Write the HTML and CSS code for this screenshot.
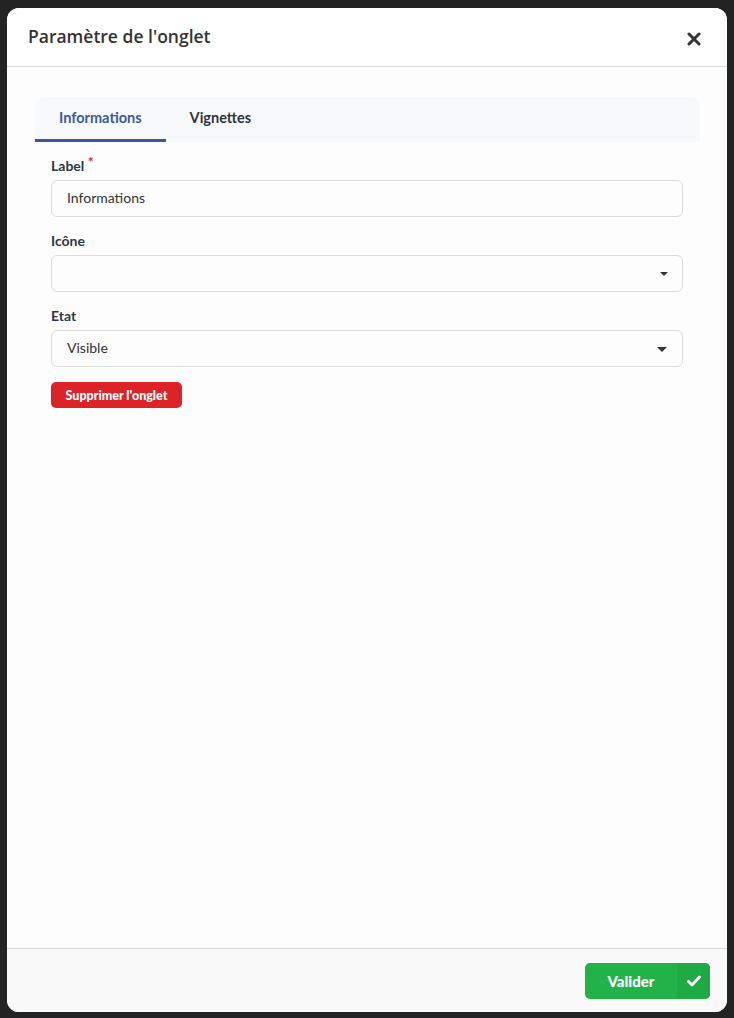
FILE: index.html
```html
<!DOCTYPE html>
<html lang="fr">
<head>
    <meta charset="UTF-8">
    <meta name="viewport" content="width=device-width, initial-scale=1.0">
    <title>Paramètre de l'onglet</title>
    <link rel="stylesheet" href="styles.css">
</head>
<body>
    <div class="modal">
        <div class="modal-header">
            <h2 class="modal-title">Paramètre de l'onglet</h2>
            <button type="button" class="close-btn" aria-label="Fermer">
                <svg width="14" height="14" viewBox="0 0 14 14">
                    <path d="M2 2 L12 12 M12 2 L2 12" stroke="#333" stroke-width="3" stroke-linecap="round"/>
                </svg>
            </button>
        </div>

        <div class="modal-body">
            <div class="tabs">
                <div class="tab active">Informations</div>
                <div class="tab">Vignettes</div>
            </div>

            <form class="tab-form">
                <div class="form-group">
                    <label for="label">Label <span class="required">*</span></label>
                    <input type="text" id="label" class="form-control" value="Informations">
                </div>

                <div class="form-group">
                    <label for="icone">Icône</label>
                    <div class="select-box" id="icone">
                        <span class="select-value"></span>
                        <span class="caret small"></span>
                    </div>
                </div>

                <div class="form-group">
                    <label for="etat">Etat</label>
                    <div class="select-box" id="etat">
                        <span class="select-value">Visible</span>
                        <span class="caret"></span>
                    </div>
                </div>

                <button type="button" class="btn-danger">Supprimer l'onglet</button>
            </form>
        </div>

        <div class="modal-footer">
            <button type="button" class="btn-success">
                <span class="btn-label">Valider</span>
                <span class="btn-icon">
                    <svg width="14" height="12" viewBox="0 0 14 12">
                        <path d="M1.5 6.5 L5 10 L12.5 2" fill="none" stroke="#fff" stroke-width="2.8" stroke-linecap="round" stroke-linejoin="round"/>
                    </svg>
                </span>
            </button>
        </div>
    </div>
</body>
</html>
```

FILE: styles.css
```css
html, body {
    height: 100%;
}
body {
    margin: 0;
    padding: 8px 7px 6px 7px;
    box-sizing: border-box;
    background-color: #232323;
    font-family: Lato, "Open Sans", sans-serif;
    color: #333;
}
.modal {
    width: 720px;
    height: 1004px;
    background: #fdfdfd;
    border-radius: 12px;
    display: flex;
    flex-direction: column;
    overflow: hidden;
}
.modal-header {
    height: 58px;
    flex: 0 0 auto;
    display: flex;
    align-items: center;
    justify-content: space-between;
    padding: 0 24px 0 21px;
    background: #fff;
    border-bottom: 1px solid #dcdcdc;
}
.modal-title {
    margin: 0;
    font-family: "Open Sans", sans-serif;
    font-size: 17.5px;
    font-weight: 600;
    color: #333;
    position: relative;
    top: -1px;
}
.close-btn {
    background: none;
    border: none;
    padding: 0;
    width: 18px;
    height: 18px;
    display: flex;
    align-items: center;
    justify-content: center;
    cursor: pointer;
    margin-top: 3px;
}
.modal-body {
    flex: 1 1 auto;
    padding: 30px 27px 0 28px;
}
.tabs {
    display: flex;
    height: 45px;
    background: #f8f9fa;
    border-radius: 10px 10px 0 0;
}
.tab {
    padding: 0 24px;
    display: flex;
    align-items: center;
    font-size: 14.5px;
    font-weight: 700;
    color: #2d3340;
    box-sizing: border-box;
    padding-bottom: 5px;
    cursor: pointer;
}
.tab.active {
    color: #3c5a99;
    border-bottom: 3px solid #3c5a99;
    padding-bottom: 2px;
}
.tab-form {
    padding: 15px 17px 0 16px;
}
.form-group {
    margin-bottom: 15px;
}
.form-group label {
    display: block;
    font-size: 14px;
    font-weight: 700;
    line-height: 18px;
    color: #2d3748;
    margin-bottom: 5px;
}
.required {
    color: #d9232d;
    position: relative;
    top: -4px;
}
.form-control,
.select-box {
    width: 100%;
    height: 37px;
    box-sizing: border-box;
    border: 1px solid #dcdcdc;
    border-radius: 6px;
    background: #fdfdfd;
    padding: 0 15px 2px 15px;
    font-family: Lato, "Open Sans", sans-serif;
    font-size: 14px;
    color: #333;
}
.form-control {
    outline: none;
}
.select-box {
    display: flex;
    align-items: center;
    justify-content: space-between;
}
.select-box .caret {
    width: 0;
    height: 0;
    border-left: 5px solid transparent;
    border-right: 5px solid transparent;
    border-top: 5px solid #333;
    margin-top: 4px;
}
.select-box .caret.small {
    border-left-width: 4px;
    border-right-width: 4px;
    border-top-width: 4px;
    margin-right: -1px;
    margin-top: 2px;
}
.btn-danger {
    height: 26px;
    width: 131px;
    border: none;
    border-radius: 5px;
    background: #dc2428;
    color: #fff;
    font-family: Lato, "Open Sans", sans-serif;
    font-size: 12.5px;
    font-weight: 900;
    padding: 0;
    cursor: pointer;
}
.modal-footer {
    height: 63px;
    flex: 0 0 auto;
    display: flex;
    align-items: center;
    justify-content: flex-end;
    padding: 0 17px;
    background: #f9f9f9;
    border-top: 1px solid #dcdcdc;
}
.btn-success {
    display: flex;
    height: 36px;
    width: 125px;
    padding: 0;
    border: none;
    border-radius: 5px;
    overflow: hidden;
    background: #22b24a;
    color: #fff;
    font-family: Lato, "Open Sans", sans-serif;
    font-size: 15px;
    font-weight: 900;
    cursor: pointer;
}
.btn-label {
    flex: 1;
    display: flex;
    align-items: center;
    justify-content: center;
}
.btn-icon {
    width: 33px;
    display: flex;
    align-items: center;
    justify-content: center;
    background: #20aa46;
}
```
